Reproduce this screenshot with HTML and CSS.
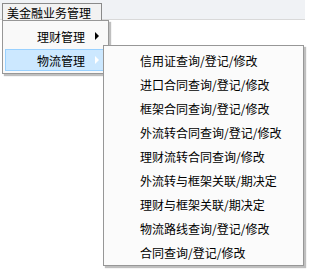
FILE: index.html
```html
<!DOCTYPE html>
<html>
<head>
<meta charset="utf-8">
<link rel="stylesheet" href="styles.css">
</head>
<body>
<div class="menubar">
  <div class="top-item">美金融业务管理</div>
</div>
<div class="dropdown">
  <div class="item">
    <span class="label">理财管理</span>
    <span class="arrow"></span>
  </div>
  <div class="item active">
    <span class="label">物流管理</span>
    <span class="arrow light"></span>
  </div>
</div>
<div class="submenu">
  <div class="sub-item">信用证查询/登记/修改</div>
  <div class="sub-item">进口合同查询/登记/修改</div>
  <div class="sub-item">框架合同查询/登记/修改</div>
  <div class="sub-item">外流转合同查询/登记/修改</div>
  <div class="sub-item">理财流转合同查询/修改</div>
  <div class="sub-item">外流转与框架关联/期决定</div>
  <div class="sub-item">理财与框架关联/期决定</div>
  <div class="sub-item">物流路线查询/登记/修改</div>
  <div class="sub-item">合同查询/登记/修改</div>
</div>
</body>
</html>
```
FILE: styles.css
```css
html, body {
  margin: 0;
  padding: 0;
  background: #ffffff;
  width: 305px;
  height: 271px;
  overflow: hidden;
  font-family: "Noto Sans CJK SC", "Noto Sans", sans-serif;
  font-size: 12px;
  color: #000;
}
.menubar {
  height: 20px;
  background: #f0f2f5;
  border-bottom: 1px solid #d9d9d9;
  box-sizing: border-box;
  padding: 3px 0 0 2px;
  display: flex;
}
.top-item {
  width: 100px;
  height: 18px;
  box-sizing: border-box;
  border: 1px solid #8a8a8a;
  border-bottom: none;
  background: #f2f2f2;
  padding-left: 4px;
  line-height: 17px;
}
.dropdown {
  position: absolute;
  left: 2px;
  top: 20px;
  width: 107px;
  box-sizing: border-box;
  border: 1px solid #979797;
  background: #f9f9f9;
  padding: 3px 2px 1px 2px;
  box-shadow: 2px 2px 1px rgba(0,0,0,0.25);
}
.item {
  height: 24px;
  display: flex;
  align-items: center;
  position: relative;
  box-sizing: border-box;
  padding-left: 32px;
}
.item.active {
  background: #cce8ff;
  border: 1px solid #99d1ff;
  height: 22px;
  margin: 1px 0;
  padding-left: 31px;
}
.arrow {
  position: absolute;
  left: 90px;
  top: 8px;
  width: 0;
  height: 0;
  border-top: 4px solid transparent;
  border-bottom: 4px solid transparent;
  border-left: 4px solid #000;
}
.item.active .arrow {
  top: 6px;
  left: 89px;
  border-left-color: #ffffff;
}
.submenu {
  position: absolute;
  left: 103px;
  top: 45px;
  width: 201px;
  box-sizing: border-box;
  border: 1px solid #979797;
  background: #fbfbfb;
  padding: 3px 0 0 0;
  box-shadow: 2px 2px 1px rgba(0,0,0,0.25);
}
.sub-item {
  height: 24px;
  line-height: 24px;
  padding-left: 36px;
  white-space: nowrap;
}
```
